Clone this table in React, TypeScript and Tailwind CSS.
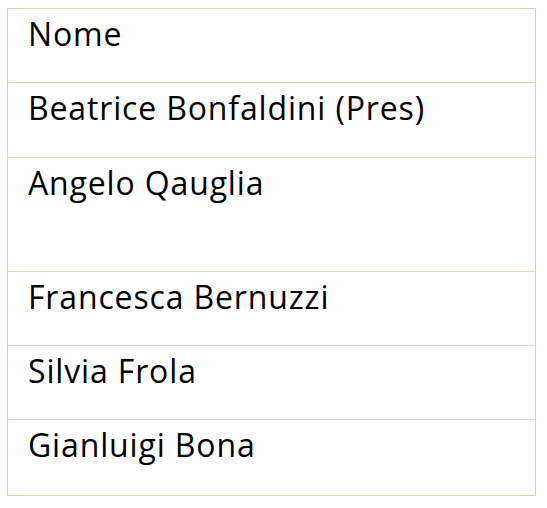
export default function App() {
  const rows = [
    { name: 'Beatrice Bonfaldini (Pres)', h: 'h-[75px]' },
    { name: 'Angelo Qauglia', h: 'h-[114px]' },
    { name: 'Francesca Bernuzzi', h: 'h-[74px]' },
    { name: 'Silvia Frola', h: 'h-[74px]' },
    { name: 'Gianluigi Bona', h: 'h-[75px]' },
  ];

  return (
    <div className="bg-white w-[547px] h-[508px] pt-[8px] pl-[7px]" style={{ fontFamily: '"Open Sans", Lato, sans-serif' }}>
      <div className="w-[529px] border border-[#f8cbad] text-black">
        <div className="h-[74px] border-b border-[#f8cbad] pl-[20px] pt-[7px] text-[32px] leading-[36px] tracking-[0.85px]">
          Nome
        </div>
        {rows.map((r, i) => (
          <div
            key={r.name}
            className={`${r.h} pl-[20px] pt-[7px] text-[32px] leading-[36px] tracking-[0.85px] ${i < rows.length - 1 ? 'border-b border-[#f6d5bf]' : ''}`}
          >
            {r.name}
          </div>
        ))}
      </div>
    </div>
  );
}
